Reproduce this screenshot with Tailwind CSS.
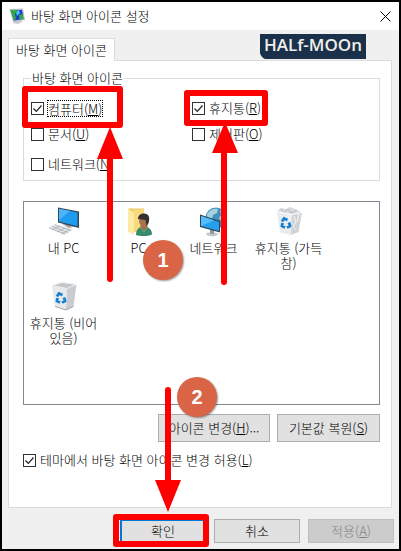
<!DOCTYPE html>
<html lang="ko">
<head>
    <meta charset="UTF-8">
    <meta name="viewport" content="width=device-width, initial-scale=1.0">
    <title>바탕 화면 아이콘 설정</title>
    <script src="https://cdn.jsdelivr.net/npm/@tailwindcss/browser@4"></script>
</head>
<body class="relative flex min-h-screen flex-col border-2 border-black bg-[#f0f0f0] font-['Noto_Sans_CJK_KR',sans-serif] text-[13px] leading-[18px] font-light text-black">

    <!-- Title bar -->
    <header class="flex h-7 items-center bg-white pr-2 pl-[7px]">
        <svg class="h-4 w-4" viewBox="0 0 16 16">
            <path d="M4 13.500l4-2 4 .5 1 2-4 2-5-1z" fill="#c9ccd0"/>
            <path d="M.5 1l13.500-.5 2 11.500-12 2z" fill="#b9bec6"/>
            <path d="M1.500 2h11.500l1.500 9-9.500 1.500z" fill="#1c3fd0"/>
            <path d="M1.500 2h7L6 6l1 5-2 1zM10 7l3.500-1 1 5-4 .5z" fill="#2fae3b"/>
            <path d="M7 4l3-2 1 3-3 3z" fill="#49c6e8"/>
        </svg>
        <h1 class="ml-[6px] flex-1">바탕 화면 아이콘 설정</h1>
        <button aria-label="닫기" class="h-[11px] w-[11px]">
            <svg viewBox="0 0 11 11" class="h-[11px] w-[11px]" stroke="#000" stroke-width="1" fill="none"><path d="M.5.500l10 10M10.500.500l-10 10"/></svg>
        </button>
    </header>

    <main class="relative flex flex-1 flex-col pt-2 pr-[7px] pl-[6px]">
        <div class="absolute top-1 right-[33px] flex h-[25px] w-[106px] items-center justify-center overflow-hidden bg-[#1b304a] pb-1 font-['Open_Sans',sans-serif] text-[17px] font-semibold text-[#f1efe9]">
            HALf-MOOn
            <svg class="absolute bottom-0 left-0 h-[6px] w-[6px]" viewBox="0 0 6 6"><path d="M0 0q1 4 5 6H0z" fill="#efeee0"/></svg>
        </div>

        <div role="tablist" class="flex">
            <button role="tab" aria-selected="true" class="relative -mb-px h-[23px] border border-b-0 border-[#dcdcdc] bg-white px-[7px]">바탕 화면 아이콘</button>
        </div>

        <section class="flex-1 border border-[#dcdcdc] bg-white pt-2 pr-[11px] pl-[14px]">
            <fieldset class="h-28 border border-[#dcdcdc] px-[7px]">
                <legend class="px-px">바탕 화면 아이콘</legend>
                <div class="grid grid-cols-[161px_1fr] pt-2">
                    <label class="flex h-[26px] items-center gap-[3px]">
                        <span class="grid">
                            <input type="checkbox" checked class="peer col-start-1 row-start-1 h-[13px] w-[13px] appearance-none border border-[#333] bg-white">
                            <svg class="col-start-1 row-start-1 hidden h-[13px] w-[13px] peer-checked:block" viewBox="0 0 13 13" fill="none" stroke="#222" stroke-width="1.2"><path d="M2.500 6.500l2.800 2.800 5.200-5.800"/></svg>
                        </span>
                        <span class="border border-dotted border-black leading-[15px]">컴퓨터(<u>M</u>)</span>
                    </label>
                    <label class="flex h-[26px] items-center gap-1">
                        <span class="grid">
                            <input type="checkbox" checked class="peer col-start-1 row-start-1 h-[13px] w-[13px] appearance-none border border-[#333] bg-white">
                            <svg class="col-start-1 row-start-1 hidden h-[13px] w-[13px] peer-checked:block" viewBox="0 0 13 13" fill="none" stroke="#222" stroke-width="1.2"><path d="M2.500 6.500l2.800 2.800 5.200-5.800"/></svg>
                        </span>
                        <span>휴지통(<u>R</u>)</span>
                    </label>
                    <label class="flex h-[26px] items-center gap-1">
                        <input type="checkbox" class="h-[13px] w-[13px] appearance-none border border-[#333] bg-white">
                        <span>문서(<u>U</u>)</span>
                    </label>
                    <label class="flex h-[26px] items-center gap-1">
                        <input type="checkbox" class="h-[13px] w-[13px] appearance-none border border-[#333] bg-white">
                        <span>제어판(<u>O</u>)</span>
                    </label>
                    <label class="mt-1 flex h-[26px] items-center gap-1">
                        <input type="checkbox" class="h-[13px] w-[13px] appearance-none border border-[#333] bg-white">
                        <span>네트워크(<u>N</u>)</span>
                    </label>
                </div>
            </fieldset>

            <ul class="mt-5 grid h-[204px] grid-cols-[repeat(auto-fill,75px)] content-start border border-[#828790] pt-1 pl-[2px] text-center leading-[15px]">
                <li class="flex h-[75px] flex-col items-center gap-[2px]">
                    <svg class="h-8 w-8" viewBox="0 0 32 32">
                        <path d="M0 21.500l7-3.500 18 5.500-8 5.500z" fill="#e3e5e7"/>
                        <path d="M1 22l16 6M4 20.500l16 6M7 19l16 5.500M4 24l8-4M9 26l8-4M13 28l8-4" stroke="#a5a9ad" stroke-width=".7"/>
                        <path d="M14 18l8-1 5 3-6 2.500z" fill="#b6babf"/>
                        <path d="M17 17l5 1v3l-5-2z" fill="#8d9297"/>
                        <path d="M10 1.500l21 4V22l-21-5.500z" fill="#344756"/>
                        <path d="M11 2.800l18.500 3.600v13.800L11 15.500z" fill="#1e9cf0"/>
                        <path d="M11 2.800l11 2.200-11 9z" fill="#4db5fa"/>
                    </svg>
                    <span>내 PC</span>
                </li>
                <li class="flex h-[75px] flex-col items-center gap-[2px]">
                    <svg class="h-8 w-8" viewBox="0 0 32 32">
                        <path d="M5 2.500h16V24l-8 2H5z" fill="#edc95c"/>
                        <path d="M10 3.500h11v22H10z" fill="#f6da7d"/>
                        <path d="M5 2.500l6 4.500V29l-6-3.500z" fill="#fdeaa5"/>
                        <path d="M13 29c0-6 3-8 8-8.500 5 .5 8 3 8 8-4 2-12 2-16 .5z" fill="#388b68"/>
                        <path d="M18 19h6l1 2-4 4-4-4z" fill="#a66f4c"/>
                        <ellipse cx="20.500" cy="15" rx="4.500" ry="5.500" fill="#a87350"/>
                        <path d="M15 13c0-4 3-5.500 6-5.500 4 0 6 3 5 7.500-.5 3-1.500 4-2.500 5l-1-6c-3 0-5-1-7.500-1z" fill="#34302e"/>
                        <path d="M17 21l4 5 4-5" fill="none" stroke="#63ac8b" stroke-width="1"/>
                    </svg>
                    <span>PC</span>
                </li>
                <li class="flex h-[75px] flex-col items-center gap-[2px]">
                    <svg class="h-8 w-8" viewBox="0 0 32 32">
                        <circle cx="18" cy="12" r="10.500" fill="#3d93bd"/>
                        <path d="M9 8c3-5 8-6 11-5l-1 4-4 2-1 4-5 1zM22 4c4 2 6 6 6 9l-4 3-3-4 2-3z" fill="#a7d1df"/>
                        <path d="M8 27l7-1 6 2-5 2.500-7-1z" fill="#c4c8cc"/>
                        <path d="M12 23l4 1v4l-4-.5z" fill="#91979c"/>
                        <path d="M2 8.500L22 15v11.500L2 21z" fill="#2b4658"/>
                        <path d="M3 10l18 6v9L3 20z" fill="#269fee"/>
                        <path d="M3 10l13 4.300L3 20z" fill="#58bbfb"/>
                    </svg>
                    <span>네트워크</span>
                </li>
                <li class="flex h-[75px] flex-col items-center gap-[2px]">
                    <svg class="h-8 w-8" viewBox="0 0 32 32">
                        <path d="M4 5l4-3 5 1 4-2 5 2 6 3-2 5-21-2z" fill="#d6dadd"/>
                        <path d="M8 3l3 4 4-4 3 4 6-3" fill="none" stroke="#aeb4b9" stroke-width=".8"/>
                        <path d="M4 5.500l15 3-1 20.500-11-2.500z" fill="#e9ebed"/>
                        <path d="M19 8.500l10-2L25.500 26 18 29z" fill="#cfd3d6"/>
                        <path d="M21 10l2 6-3 5 3 3M26 8l-2 8M7 9l3 2-2 2M15 9l2 6" fill="none" stroke="#f4f5f6" stroke-width="1"/>
                        <path d="M4 5.500l15 3 10-2" fill="none" stroke="#fff" stroke-width="1"/>
                        <g fill="none" stroke="#1580d2" stroke-width="2.800"><path d="M9 15.500l2-3 3.500 1.500M16 16.500l1 3.500-3 1.500M12 21.500l-3-1.500.5-3"/></g>
                    </svg>
                    <span>휴지통 (가득<br>참)</span>
                </li>
                <li class="flex h-[75px] flex-col items-center gap-[2px]">
                    <svg class="h-8 w-8" viewBox="0 0 32 32">
                        <path d="M4 4.500l10-3 14 2-9 4z" fill="#c3c7ca"/>
                        <path d="M4 4.500l15 3-1 21.500-11-3.500z" fill="#e6e8ea"/>
                        <path d="M19 7.500l9.500-4L25.500 25.500 18 29z" fill="#c8ccd0"/>
                        <path d="M4 4.500l10-3 14 2-9 4z" fill="none" stroke="#eceeef" stroke-width="1"/>
                        <path d="M7 25.500L18 29l7.500-3.500" fill="none" stroke="#a3a8ac" stroke-width="1"/>
                        <g fill="none" stroke="#1580d2" stroke-width="2.800"><path d="M9 15.500l2-3 3.500 1.500M16 16.500l1 3.500-3 1.500M12 21.500l-3-1.500.5-3"/></g>
                    </svg>
                    <span>휴지통 (비어<br>있음)</span>
                </li>
            </ul>

            <div class="mt-[9px] flex justify-end gap-[7px]">
                <button class="h-7 w-28 border border-[#adadad] bg-[#e1e1e1]">아이콘 변경(<u>H</u>)...</button>
                <button class="h-7 w-[103px] border border-[#adadad] bg-[#e1e1e1]">기본값 복원(<u>S</u>)</button>
            </div>

            <label class="mt-[9px] flex items-center gap-1">
                <span class="grid">
                    <input type="checkbox" checked class="peer col-start-1 row-start-1 h-[13px] w-[13px] appearance-none border border-[#333] bg-white">
                    <svg class="col-start-1 row-start-1 hidden h-[13px] w-[13px] peer-checked:block" viewBox="0 0 13 13" fill="none" stroke="#222" stroke-width="1.2"><path d="M2.500 6.500l2.800 2.800 5.200-5.800"/></svg>
                </span>
                <span>테마에서 바탕 화면 아이콘 변경 허용(<u>L</u>)</span>
            </label>
        </section>
    </main>

    <footer class="flex justify-end gap-2 pt-[11px] pr-[5px] pb-[6px]">
        <button class="h-6 w-[86px] border-2 border-[#0078d7] bg-[#e1e1e1]">확인</button>
        <button class="h-6 w-[86px] border border-[#adadad] bg-[#e1e1e1]">취소</button>
        <button disabled class="h-6 w-[86px] border border-[#bfbfbf] bg-[#cccccc] text-[#838383]">적용(<u>A</u>)</button>
    </footer>

    <!-- Step markers drawn over the dialog -->
    <svg class="pointer-events-none absolute -top-[2px] -left-[2px] h-[551px] w-[401px]" viewBox="0 0 401 551" fill="none" stroke="#f00" stroke-width="6" stroke-linejoin="round" stroke-linecap="round">
        <rect x="25" y="89" width="95" height="36"/>
        <rect x="187" y="93" width="78" height="30"/>
        <rect x="116" y="517" width="90" height="27"/>
        <path d="M110 155v124M224 150v132M168 390v94"/>
        <path d="M110 127l13 32H97zM225 122l13 31h-26zM168 512l-13-32h26z" fill="#f00" stroke="none"/>
    </svg>
    <span class="absolute top-[238px] left-[141px] flex h-10 w-10 items-center justify-center rounded-full bg-[#d96546] font-['Liberation_Sans',sans-serif] text-[20px] font-bold text-white shadow-[1px_1px_2px_rgba(0,0,0,0.4)]">1</span>
    <span class="absolute top-[375px] left-[175px] flex h-10 w-10 items-center justify-center rounded-full bg-[#d96546] font-['Liberation_Sans',sans-serif] text-[20px] font-bold text-white shadow-[1px_1px_2px_rgba(0,0,0,0.4)]">2</span>
</body>
</html>
